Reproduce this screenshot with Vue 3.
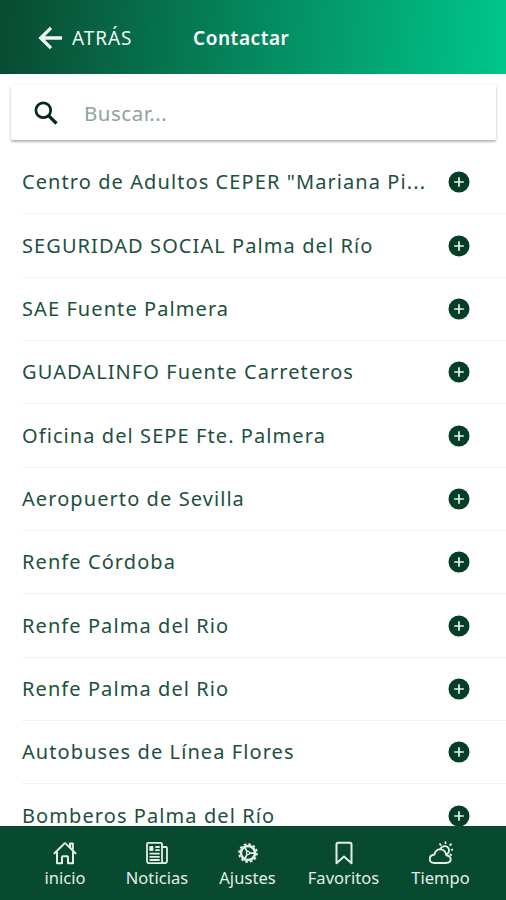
<script setup>
const contacts = [
  'Centro de Adultos CEPER "Mariana Pi...',
  'SEGURIDAD SOCIAL Palma del Río',
  'SAE Fuente Palmera',
  'GUADALINFO Fuente Carreteros',
  'Oficina del SEPE Fte. Palmera',
  'Aeropuerto de Sevilla',
  'Renfe Córdoba',
  'Renfe Palma del Rio',
  'Renfe Palma del Rio',
  'Autobuses de Línea Flores',
  'Bomberos Palma del Río',
]
</script>

<template>
  <div class="screen">
    <header class="toolbar">
      <button class="back">
        <svg class="back-icon" viewBox="0 0 24 24" fill="none" stroke="currentColor" stroke-width="3.3">
          <path d="M13 1.800 2.700 12 13 22.200M3 12H24" />
        </svg>
        <span>ATRÁS</span>
      </button>
      <h1 class="title">Contactar</h1>
    </header>

    <label class="search">
      <svg class="search-icon" viewBox="0 0 24 24" fill="none" stroke="currentColor">
        <circle cx="9.3" cy="9.3" r="7.4" stroke-width="2.7" />
        <path d="m14.600 14.600 7.900 7.900" stroke-width="3.2" />
      </svg>
      <span class="placeholder">Buscar...</span>
    </label>

    <ul class="list">
      <li v-for="(name, i) in contacts" :key="i" class="row">
        <span class="name">{{ name }}</span>
        <svg class="add" viewBox="0 0 22 22">
          <circle cx="11" cy="11" r="10.5" fill="#043e27" />
          <path d="M11 6.200v9.600M6.200 11h9.600" stroke="#e9f3ee" stroke-width="1.7" />
        </svg>
      </li>
    </ul>

    <nav class="tabs">
      <a class="tab home">
        <svg class="tab-icon" viewBox="0 0 24 24" fill="none" stroke="currentColor" stroke-width="2" stroke-linejoin="round" stroke-linecap="round">
          <path d="M4 10.800V22.200h5v-6.200q0-.8.8-.8h4.400q.8 0 .8.8v6.200h5V10.800M1.500 12.200 11.300 2.600q.7-.6 1.400 0L22.500 12.200M17 6.400V2.600h2.800v6.400" />
        </svg>
        <span>inicio</span>
      </a>
      <a class="tab news">
        <svg class="tab-icon" viewBox="0 0 24 24" fill="none" stroke="currentColor" stroke-width="1.8" stroke-linejoin="round" stroke-linecap="round">
          <path d="M17 20V3q0-1.200-1.200-1.200H3.200Q2 1.800 2 3v17q0 2.200 2.200 2.200h15q-2.200 0-2.200-2.200ZM17 6h3.800q1.200 0 1.200 1.200v12.500q0 2.500-2.500 2.500" />
          <path d="M11 6h3M11 9.200h3M5.200 12.600h8.800M5.200 15.800h8.800M5.200 19h8.800" />
          <path d="M5.200 5.800h2.300v3.200H5.200z" fill="currentColor" />
        </svg>
        <span>Noticias</span>
      </a>
      <a class="tab settings">
        <svg class="tab-icon gear" viewBox="0 0 24 24" fill="none" stroke="currentColor">
          <circle cx="12" cy="12" r="8.500" stroke-width="3" />
          <circle cx="12" cy="12" r="10.800" stroke-width="2" stroke-dasharray="3.200 2.455" />
          <circle cx="12" cy="12" r="1.900" stroke-width="1.500" />
          <path d="M13.800 12h6.500M11 10.300 7.900 5M11 13.700 7.900 19" stroke-width="2.100" />
        </svg>
        <span>Ajustes</span>
      </a>
      <a class="tab favorites">
        <svg class="tab-icon" viewBox="0 0 24 24" fill="none" stroke="currentColor" stroke-width="2" stroke-linejoin="round">
          <path d="M6 1.800h12q1.500 0 1.500 1.700v18.700L12 15.600l-7.500 6.600V3.500Q4.500 1.800 6 1.800Z" />
        </svg>
        <span>Favoritos</span>
      </a>
      <a class="tab weather">
        <svg class="tab-icon" viewBox="0 0 24 24" fill="none" stroke="currentColor" stroke-width="1.9" stroke-linejoin="round" stroke-linecap="round">
          <path d="M5.200 22h11.800q4.500-.2 4.700-3.600.1-3.300-4.400-4-.9-6-6.300-6-4.300 0-5.600 5.100-4.700.700-4.700 4.500Q.9 21.700 5.200 22Z" />
          <path d="M11.500 7.800q1.600-2.800 4.400-2.700 3.800.4 4.200 4 .1 2.800-2.300 4.300M16.500 1.200v1M11 3.200l.7.700M22 3.200l-.8.800M23.600 8.700h-.7M22 14l-.5-.5" />
        </svg>
        <span>Tiempo</span>
      </a>
    </nav>
  </div>
</template>

<style>
body {
  margin: 0;
  background: #fff;
}
</style>

<style scoped>
.screen {
  display: flex;
  flex-direction: column;
  width: 506px;
  height: 900px;
  overflow: hidden;
  background: #fff;
  font-family: "Noto Sans", "Open Sans", sans-serif;
}
.toolbar {
  display: flex;
  align-items: center;
  flex: none;
  box-sizing: border-box;
  height: 74px;
  padding: 2px 0 0 38px;
  color: #fff;
  background: linear-gradient(94deg, #094a31 0%, #00c68a 100%);
}
.back {
  display: flex;
  align-items: center;
  gap: 10px;
  width: 155px;
  padding: 0;
  border: 0;
  background: none;
  color: #f0f7f4;
  font: 400 19px/28px "Noto Sans", "Open Sans", sans-serif;
  letter-spacing: 0.9px;
}
.back-icon {
  width: 24px;
  height: 24px;
}
.title {
  margin: 0;
  font-size: 19px;
  line-height: 28px;
  font-weight: 600;
  letter-spacing: 0.55px;
}
.search {
  display: flex;
  align-items: center;
  flex: none;
  box-sizing: border-box;
  height: 55px;
  margin: 11px 10px 11px 11px;
  padding: 1px 0 0 23px;
  gap: 26px;
  border-radius: 2px;
  box-shadow: 0 2px 2px rgba(0, 0, 0, 0.22), 0 1px 4px rgba(0, 0, 0, 0.12);
}
.search-icon {
  width: 24px;
  height: 24px;
  color: #06281b;
}
.placeholder {
  color: #8fa39b;
  font-size: 20.5px;
  line-height: 28px;
  letter-spacing: 0.5px;
}
.list {
  flex: 1;
  min-height: 0;
  margin: 0;
  padding: 0;
  overflow: hidden;
  list-style: none;
}
.row {
  display: flex;
  align-items: center;
  box-sizing: border-box;
  height: 63.35px;
  margin-left: 22px;
  padding-right: 36px;
  border-bottom: 1px solid #f1f1f1;
}
.name {
  margin-right: auto;
  white-space: nowrap;
  color: #20503d;
  font-size: 20px;
  line-height: 28px;
  letter-spacing: 1.08px;
}
.add {
  flex: none;
  width: 22px;
  height: 22px;
}
.tabs {
  display: flex;
  flex: none;
  box-sizing: border-box;
  height: 74px;
  padding: 15px 14px 0;
  background: #074a30;
  color: #e4eee9;
}
.tab {
  display: flex;
  flex-direction: column;
  align-items: center;
  flex: none;
  gap: 1px;
  font-size: 16.5px;
  line-height: 24px;
  letter-spacing: 0.05px;
}
.home { width: 102px; }
.news { width: 82px; }
.settings { width: 99px; }
.favorites { width: 93px; }
.weather { width: 101px; }
.tab-icon {
  width: 24px;
  height: 24px;
}
.gear {
  width: 20px;
  height: 20px;
  margin: 2px;
}
</style>
